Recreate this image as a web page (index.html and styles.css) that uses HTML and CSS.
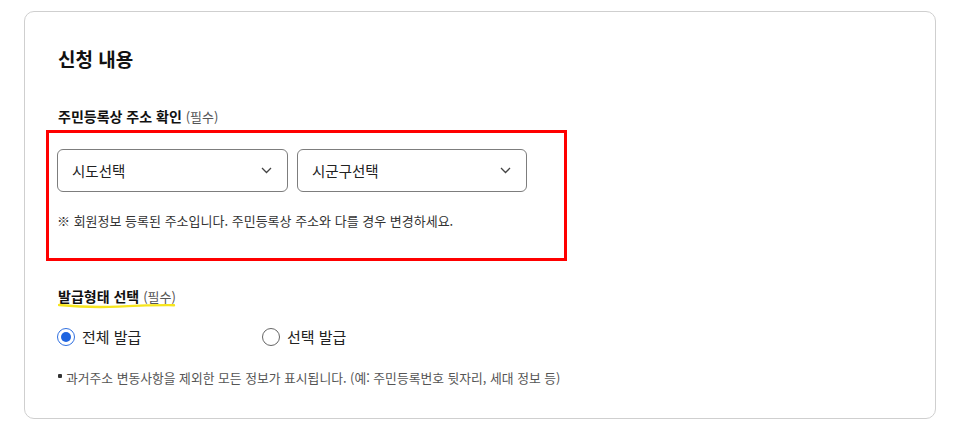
FILE: index.html
```
<!DOCTYPE html>
<html lang="ko">
<head>
    <meta charset="UTF-8">
    <meta name="viewport" content="width=device-width, initial-scale=1.0">
    <title>신청 내용</title>
    <link rel="stylesheet" href="styles.css">
</head>
<body>
    <div class="card">
        <h2 class="card-title">신청 내용</h2>

        <div class="field-label">주민등록상 주소 확인 <span class="req">(필수)</span></div>
        <div class="address-box">
            <div class="select-row">
                <div class="select">
                    <span>시도선택</span>
                    <svg class="chev" width="11" height="7" viewBox="0 0 11 7"><path d="M1 1l4.5 4.5L10 1" fill="none" stroke="#444" stroke-width="1.3"/></svg>
                </div>
                <div class="select">
                    <span>시군구선택</span>
                    <svg class="chev" width="11" height="7" viewBox="0 0 11 7"><path d="M1 1l4.5 4.5L10 1" fill="none" stroke="#444" stroke-width="1.3"/></svg>
                </div>
            </div>
            <p class="address-note">※ 회원정보 등록된 주소입니다. 주민등록상 주소와 다를 경우 변경하세요.</p>
        </div>

        <div class="field-label highlight">
            <span class="hl-text">발급형태 선택 <span class="req">(필수)</span></span>
            <svg class="hl-line" width="118" height="7" viewBox="0 0 118 7"><path d="M1 3C20 4.8 40 5.5 60 4.6S100 3 116 3.2" fill="none" stroke="#f6e51c" stroke-width="2.4" stroke-linecap="round"/></svg>
        </div>

        <div class="radio-row">
            <label class="radio checked"><span class="dot"></span>전체 발급</label>
            <label class="radio"><span class="dot"></span>선택 발급</label>
        </div>

        <p class="bullet-note"><span class="bullet"></span>과거주소 변동사항을 제외한 모든 정보가 표시됩니다. (예: 주민등록번호 뒷자리, 세대 정보 등)</p>
    </div>
</body>
</html>
```

FILE: styles.css
```
body {
    margin: 0;
    padding: 11px 0 0 24px;
    font-family: "Noto Sans CJK KR", "Noto Sans", sans-serif;
    color: #222;
    background: #fff;
}

.card {
    box-sizing: border-box;
    width: 912px;
    height: 408px;
    border: 1px solid #cfcfcf;
    border-radius: 10px;
    padding: 34px 0 0 33px;
}

.card-title {
    margin: 0;
    font-size: 19px;
    line-height: 26px;
    font-weight: 700;
    color: #111;
}

.field-label {
    margin-top: 34px;
    font-size: 14px;
    line-height: 20px;
    font-weight: 700;
    color: #111;
}

.req {
    font-size: 13px;
    font-weight: 400;
    color: #555;
}

.address-box {
    margin: 3px 0 0 -12px;
    width: 521px;
    height: 131px;
    box-sizing: border-box;
    border: 3px solid #ff0000;
    padding: 16px 0 0 8px;
}

.select-row {
    display: flex;
    gap: 9px;
}

.select {
    width: 231px;
    height: 43px;
    box-sizing: border-box;
    border: 1px solid #7d7d7d;
    border-radius: 6px;
    padding: 0 15px 0 14px;
    display: flex;
    align-items: center;
    justify-content: space-between;
    font-size: 14.5px;
    color: #222;
}

.select + .select {
    width: 230px;
}

.address-note {
    margin: 20px 0 0;
    font-size: 13px;
    line-height: 18px;
    color: #333;
}

.field-label.highlight {
    margin-top: 25px;
    position: relative;
    display: inline-block;
}

.hl-line {
    position: absolute;
    left: 0;
    top: 16px;
}

.radio-row {
    display: flex;
    margin-top: 19px;
    margin-left: -1px;
}

.radio {
    display: flex;
    align-items: center;
    gap: 7px;
    font-size: 15px;
    line-height: 22px;
    color: #222;
    width: 205px;
}

.dot {
    width: 18px;
    height: 18px;
    box-sizing: border-box;
    border: 1.5px solid #666;
    border-radius: 50%;
    display: flex;
    align-items: center;
    justify-content: center;
}

.radio.checked .dot {
    border-color: #2f6fe0;
}

.radio.checked .dot::after {
    content: "";
    width: 10px;
    height: 10px;
    border-radius: 50%;
    background: #1f64e0;
}

.bullet-note {
    margin: 21px 0 0;
    font-size: 12.8px;
    line-height: 18px;
    color: #555;
    display: flex;
    align-items: center;
}

.bullet {
    width: 4px;
    height: 4px;
    background: #333;
    border-radius: 1px;
    margin-right: 4px;
    margin-top: -5px;
}
```
